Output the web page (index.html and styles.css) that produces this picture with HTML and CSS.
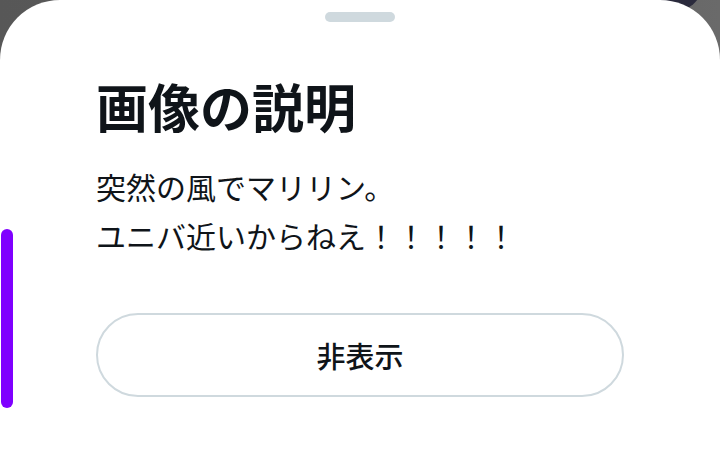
FILE: index.html
```html
<!DOCTYPE html>
<html lang="ja">
<head>
<meta charset="utf-8">
<link rel="stylesheet" href="styles.css">
</head>
<body>
<div class="backdrop">
  <div class="blob"></div>
  <div class="sheet">
    <div class="handle"></div>
    <div class="content">
      <h1 class="title">画像の説明</h1>
      <p class="desc">突然の風でマリリン。<br>ユニバ近いからねえ！！！！！</p>
      <button class="hide-btn">非表示</button>
    </div>
  </div>
  <div class="scroll-indicator"></div>
</div>
</body>
</html>
```
FILE: styles.css
```css
html, body {
  margin: 0;
  padding: 0;
}
body {
  width: 720px;
  height: 461px;
  overflow: hidden;
  font-family: "Noto Sans CJK JP", "Noto Sans", sans-serif;
  color: #0f1419;
}
.backdrop {
  position: relative;
  width: 720px;
  height: 461px;
  background: linear-gradient(90deg, #575757 0%, #5e5e5e 60%, #6a6a6a 100%);
  overflow: hidden;
}
.blob {
  position: absolute;
  left: 640px;
  top: -40px;
  width: 62px;
  height: 52px;
  border-radius: 50%;
  background: #2a2a3c;
}
.sheet {
  position: relative;
  height: 461px;
  background: #ffffff;
  border-radius: 60px 60px 0 0;
  display: flex;
  flex-direction: column;
  align-items: center;
  padding-top: 12px;
  box-sizing: border-box;
}
.handle {
  width: 70px;
  height: 10px;
  border-radius: 5px;
  background: #cfd9de;
  flex: none;
}
.content {
  align-self: stretch;
  padding: 0 96px;
  display: flex;
  flex-direction: column;
}
.title {
  margin: 54px 0 0 0;
  font-size: 52px;
  line-height: 60px;
  font-weight: 700;
}
.desc {
  margin: 26px 0 0 0;
  font-size: 30px;
  line-height: 49px;
  font-weight: 400;
}
.hide-btn {
  margin-top: 53px;
  height: 84px;
  border: 2px solid #cfd9de;
  border-radius: 42px;
  background: #ffffff;
  font-family: "Noto Sans CJK JP", "Noto Sans", sans-serif;
  font-size: 29px;
  font-weight: 500;
  color: #0f1419;
  padding: 0;
}
.scroll-indicator {
  position: absolute;
  left: 1px;
  top: 229px;
  width: 12px;
  height: 179px;
  border-radius: 6px;
  background: #7f00ff;
}
```
